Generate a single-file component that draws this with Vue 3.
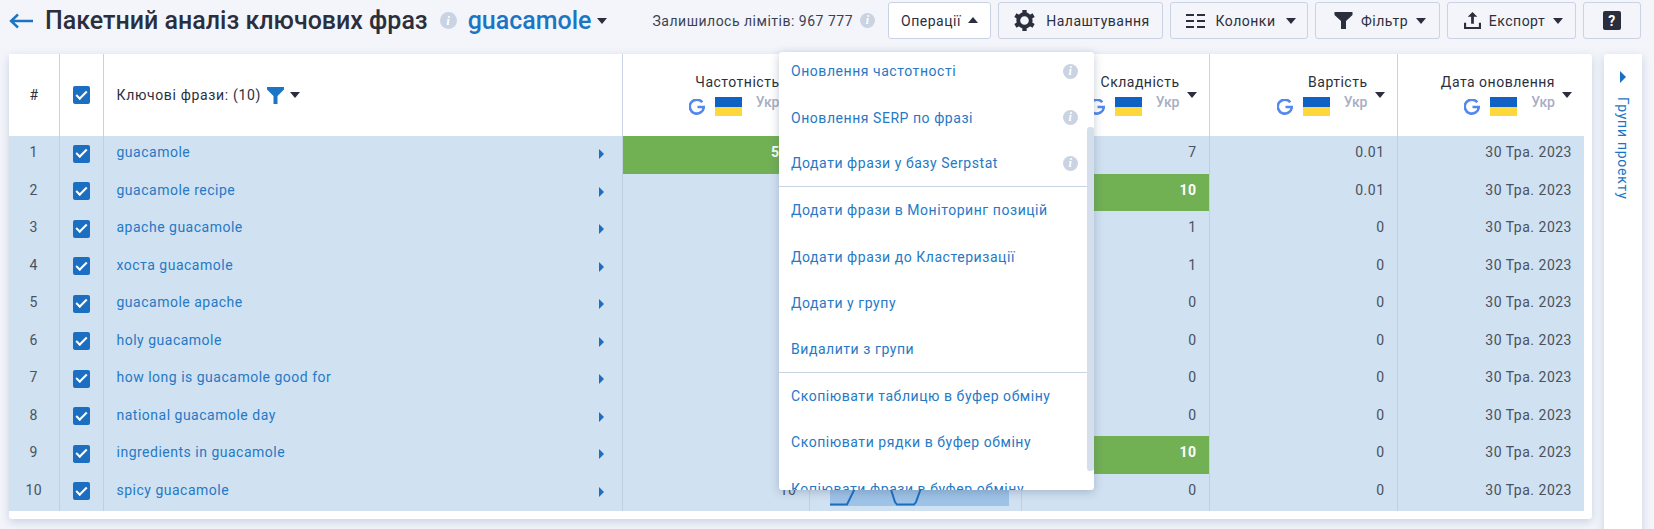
<script setup>
const rows = [
  { phrase: 'guacamole', freq: '590', freqHot: true, diff: '7', cost: '0.01' },
  { phrase: 'guacamole recipe', freq: '', diff: '10', diffHot: true, cost: '0.01' },
  { phrase: 'apache guacamole', freq: '', diff: '1', cost: '0' },
  { phrase: 'хоста guacamole', freq: '', diff: '1', cost: '0' },
  { phrase: 'guacamole apache', freq: '', diff: '0', cost: '0' },
  { phrase: 'holy guacamole', freq: '', diff: '0', cost: '0' },
  { phrase: 'how long is guacamole good for', freq: '', diff: '0', cost: '0' },
  { phrase: 'national guacamole day', freq: '', diff: '0', cost: '0' },
  { phrase: 'ingredients in guacamole', freq: '', diff: '10', diffHot: true, cost: '0' },
  { phrase: 'spicy guacamole', freq: '10', diff: '0', cost: '0', chart: true }
];

const columns = [
  { title: 'Частотність', cls: 'col-freq' },
  { title: 'Складність', cls: 'col-diff' },
  { title: 'Вартість', cls: 'col-cost' },
  { title: 'Дата оновлення', cls: 'col-date' }
];

const menu = [
  { label: 'Оновлення частотності', info: true },
  { label: 'Оновлення SERP по фразі', info: true },
  { label: 'Додати фрази у базу Serpstat', info: true, divider: true },
  { label: 'Додати фрази в Моніторинг позицій' },
  { label: 'Додати фрази до Кластеризації' },
  { label: 'Додати у групу' },
  { label: 'Видалити з групи', divider: true },
  { label: 'Скопіювати таблицю в буфер обміну' },
  { label: 'Скопіювати рядки в буфер обміну' },
  { label: 'Копіювати фрази в буфер обміну' }
];
</script>

<template>
  <div class="page">
    <header class="toolbar">
      <svg class="back" viewBox="0 0 24 16" width="24" height="16">
        <path d="M9 1.500 2 8l7 6.500M2 8h22" fill="none" stroke="#1c75c4" stroke-width="2.400" />
      </svg>
      <h1 class="title">Пакетний аналіз ключових фраз</h1>
      <span class="info info-lg">i</span>
      <span class="project">guacamole</span>
      <span class="caret caret-blue"></span>
      <span class="limits">Залишилось лімітів: 967 777</span>
      <span class="info info-limits">i</span>

      <button class="btn btn-ops">Операції <span class="caret caret-up"></span></button>
      <button class="btn btn-settings">
        <svg viewBox="0 0 24 24" width="23" height="23">
          <circle cx="12" cy="12" r="6.500" fill="none" stroke="#2b2f3d" stroke-width="4" />
          <path d="M12 1v4M12 19v4M2.500 6.500l3.500 2M18 15.500l3.500 2M2.500 17.500l3.500-2M18 8.500l3.500-2" fill="none" stroke="#2b2f3d" stroke-width="4.500" />
        </svg>
        Налаштування
      </button>
      <button class="btn btn-columns">
        <svg viewBox="0 0 19 16" width="21" height="16">
          <path fill="#2b2f3d" d="M0 1h8v2H0zM11 1h8v2h-8zM0 7h8v2H0zM11 7h8v2h-8zM0 13h8v2H0zM11 13h8v2h-8z" />
        </svg>
        Колонки <span class="caret"></span>
      </button>
      <button class="btn btn-filter">
        <svg viewBox="0 0 18 17" width="19" height="17">
          <path fill="#2b2f3d" d="M0 0h18v3l-6.500 6v8H6.500V9L0 3z" />
        </svg>
        Фільтр <span class="caret"></span>
      </button>
      <button class="btn btn-export">
        <svg viewBox="0 0 16 16" width="17" height="17">
          <path fill="#2b2f3d" d="M8 0l4.500 4.500H9.300V11H6.700V4.500H3.500zM0 10h2v4h12v-4h2v6H0z" />
        </svg>
        Експорт <span class="caret"></span>
      </button>
      <button class="btn btn-help"><span class="help-box">?</span></button>
    </header>

    <main class="content">
      <section class="card">
        <table class="grid">
          <colgroup>
            <col class="w-num" />
            <col class="w-check" />
            <col class="w-phrase" />
            <col class="w-freq" />
            <col class="w-chart" />
            <col class="w-diff" />
            <col class="w-cost" />
            <col class="w-date" />
          </colgroup>
          <thead>
            <tr>
              <th class="th-num">#</th>
              <th class="th-check"><span class="checkbox"></span></th>
              <th class="th-phrase">
                <div class="phrase-head">
                  <span>Ключові фрази: (10)</span>
                  <svg viewBox="0 0 17 17" width="17" height="17">
                    <path fill="#1c75c4" d="M0 0h17v2.500L10.500 9v8h-4V9L0 2.500z" />
                  </svg>
                  <span class="caret"></span>
                </div>
              </th>
              <template v-for="(col, i) in columns" :key="col.title">
                <th :class="['th-metric', col.cls]">
                  <div class="metric-head">
                    <div class="metric-stack">
                      <div class="metric-title">{{ col.title }}</div>
                      <div class="metric-sub">
                        <svg class="g-icon" viewBox="0 0 16 16" width="16" height="16">
                          <path d="M13.300 3.300A7 7 0 1 0 14.800 8H8.500" fill="none" stroke="#5488ee" stroke-width="2.600" />
                        </svg>
                        <span class="flag"></span>
                        <span class="lang">Укр</span>
                      </div>
                    </div>
                    <span class="caret"></span>
                  </div>
                </th>
                <th v-if="i === 0"></th>
              </template>
            </tr>
          </thead>
          <tbody>
            <tr v-for="(row, i) in rows" :key="row.phrase">
              <td class="td-num">{{ i + 1 }}</td>
              <td class="td-check"><span class="checkbox"></span></td>
              <td class="td-phrase">
                <div class="phrase-cell">
                  <span>{{ row.phrase }}</span>
                  <span class="arrow-right"></span>
                </div>
              </td>
              <td class="td-val" :class="{ hot: row.freqHot }">{{ row.freq }}</td>
              <td class="td-chart">
                <svg v-if="row.chart" class="spark" viewBox="0 0 179 32" width="179" height="32">
                  <rect x="0" y="0" width="179" height="32" fill="#9dc3e6" />
                  <path d="M0 30.500h17L32 0M56 0l9 28 2 2.500h17l2-2.500L96 0" fill="none" stroke="#1c6fc0" stroke-width="2" />
                </svg>
              </td>
              <td class="td-val" :class="{ hot: row.diffHot }">{{ row.diff }}</td>
              <td class="td-val">{{ row.cost }}</td>
              <td class="td-val">30 Тра. 2023</td>
            </tr>
          </tbody>
        </table>

        <div class="dropdown">
          <ul class="menu">
            <li v-for="item in menu" :key="item.label" class="menu-item" :class="{ divided: item.divider }">
              <span>{{ item.label }}</span>
              <span v-if="item.info" class="info">i</span>
            </li>
          </ul>
          <div class="scrollbar"></div>
        </div>
      </section>

      <aside class="side">
        <span class="arrow-right arrow-side"></span>
        <span class="side-label">Групи проекту</span>
      </aside>
    </main>
  </div>
</template>

<style scoped>
.page {
  height: 529px;
  overflow: hidden;
  background: #f3f5fa;
  font-family: Roboto, "Liberation Sans", sans-serif;
  font-size: 14px;
  color: #2b2f3d;
}

.toolbar {
  display: flex;
  align-items: center;
  height: 37px;
  padding: 2px 13px 0 9px;
}
.back {
  flex: none;
  margin-right: 12px;
}
.title {
  margin: 0 12px 0 0;
  font-size: 25px;
  font-weight: 500;
  white-space: nowrap;
  color: #2b2f3d;
}
.project {
  margin-left: 11px;
  font-size: 25px;
  font-weight: 500;
  color: #1c75c4;
}
.caret-blue {
  margin-left: 6px;
  border-top-color: #1c75c4;
}
.limits {
  margin-left: auto;
  letter-spacing: 0.5px;
  color: #3c4150;
}
.info-limits {
  margin: 0 13px 0 7px;
}

.info {
  display: inline-flex;
  flex: none;
  align-items: center;
  justify-content: center;
  width: 15px;
  height: 15px;
  border-radius: 50%;
  background: #c9d3e2;
  color: #fff;
  font-family: "Liberation Serif", serif;
  font-size: 12px;
  font-style: italic;
  font-weight: 700;
}
.info-lg {
  width: 17px;
  height: 17px;
  font-size: 13px;
}

.caret {
  display: inline-block;
  flex: none;
  width: 0;
  height: 0;
  border-left: 5px solid transparent;
  border-right: 5px solid transparent;
  border-top: 6px solid #2b2f3d;
}
.caret-up {
  margin-left: 3px;
  margin-bottom: 2px;
  border-top: 0;
  border-bottom: 6px solid #2b2f3d;
}

.btn {
  display: flex;
  flex: none;
  align-items: center;
  justify-content: center;
  gap: 8px;
  box-sizing: border-box;
  height: 37px;
  margin-left: 7px;
  padding: 0;
  border: 1px solid #c9d3e4;
  border-radius: 3px;
  background: #f3f5fa;
  font-family: inherit;
  font-size: 14px;
  letter-spacing: 0.5px;
  color: #2b2f3d;
}
.btn-ops {
  width: 103px;
  gap: 4px;
  margin-left: 0;
  background: #fff;
}
.btn-settings {
  width: 165px;
  gap: 10px;
  padding-left: 2px;
}
.btn-columns {
  width: 138px;
  gap: 10px;
  padding-left: 2px;
}
.btn-filter {
  width: 125px;
  padding-left: 5px;
}
.btn-export {
  width: 129px;
  padding-left: 4px;
}
.btn-help {
  width: 58px;
}
.help-box {
  display: flex;
  align-items: center;
  justify-content: center;
  width: 18px;
  height: 19px;
  border-radius: 2px;
  background: #2b2f3d;
  color: #fff;
  font-weight: 700;
  font-size: 14px;
}

.content {
  display: flex;
  align-items: flex-start;
  gap: 12px;
  padding: 15px 12px 0 9px;
}
.card {
  position: relative;
  flex: none;
  box-sizing: border-box;
  width: 1583px;
  padding: 0 8px 8px 0;
  border-radius: 3px;
  background: #fff;
  box-shadow: 0 3px 10px rgba(120, 140, 180, 0.35);
}
.side {
  display: flex;
  flex: none;
  flex-direction: column;
  align-items: center;
  box-sizing: border-box;
  width: 38px;
  height: 500px;
  padding-top: 17px;
  border-radius: 3px 0 0 0;
  background: #fff;
  box-shadow: 0 3px 10px rgba(120, 140, 180, 0.35);
}
.arrow-right {
  display: inline-block;
  flex: none;
  width: 0;
  height: 0;
  border-top: 5px solid transparent;
  border-bottom: 5px solid transparent;
  border-left: 5px solid #1c6fc0;
}
.arrow-side {
  border-top-width: 6px;
  border-bottom-width: 6px;
  border-left-width: 6px;
}
.side-label {
  margin-top: 14px;
  writing-mode: vertical-rl;
  letter-spacing: 0.75px;
  color: #1c75c4;
}

.grid {
  width: 1575px;
  table-layout: fixed;
  border-collapse: collapse;
}
.w-num { width: 50px; }
.w-check { width: 44px; }
.w-phrase { width: 519px; }
.w-freq { width: 187px; }
.w-chart { width: 212px; }
.w-diff { width: 188px; }
.w-cost { width: 188px; }
.w-date { width: 187px; }

th {
  height: 82px;
  padding: 0;
  border-right: 1px solid #c9d3e4;
  font-weight: 400;
  background: #fff;
}
th:last-child,
td:last-child {
  border-right: 0;
}
td {
  box-sizing: border-box;
  height: 37.5px;
  padding: 0 12px 5px;
  border-right: 1px solid #c0d0e2;
  background: #d0e1f1;
  letter-spacing: 0.5px;
  color: #4a5160;
}
.th-num,
.td-num {
  text-align: center;
  padding-left: 0;
  padding-right: 0;
}
.th-check,
.td-check {
  padding: 0;
  text-align: center;
}
.td-check {
  padding-bottom: 2px;
}
.checkbox {
  display: inline-flex;
  align-items: center;
  justify-content: center;
  width: 17px;
  height: 18px;
  border-radius: 2px;
  background: #1c6fc0;
  vertical-align: middle;
}
.checkbox::after {
  content: "";
  width: 9px;
  height: 4px;
  margin-top: -3px;
  border-left: 2px solid #fff;
  border-bottom: 2px solid #fff;
  transform: rotate(-45deg);
}
.phrase-head {
  display: flex;
  align-items: center;
  gap: 6px;
  padding-left: 13px;
  letter-spacing: 0.65px;
}
.phrase-cell {
  display: flex;
  align-items: center;
  justify-content: space-between;
  padding-right: 4px;
  color: #2679c5;
}
.td-phrase {
  padding-left: 13px;
  padding-right: 14px;
}
.phrase-cell .arrow-right {
  margin-top: 4px;
}

.metric-head {
  display: flex;
  align-items: center;
  justify-content: flex-end;
  gap: 7px;
  padding-right: 12px;
}
.metric-stack {
  display: flex;
  flex-direction: column;
  align-items: flex-end;
  gap: 7px;
}
.metric-title {
  white-space: nowrap;
  letter-spacing: 0.5px;
}
.metric-sub {
  display: flex;
  align-items: flex-start;
  height: 19px;
}
.g-icon {
  margin-top: 2px;
}
.flag {
  width: 27px;
  height: 19px;
  margin: 0 14px 0 10px;
  background: linear-gradient(#0f62c4 0 50%, #fed73b 50% 100%);
}
.lang {
  margin-top: -3px;
  font-weight: 500;
  color: #a9aec5;
}

.td-val {
  text-align: right;
}
.td-val.hot {
  background: #72b054;
  color: #fff;
  font-weight: 700;
}
.td-chart {
  padding: 0 0 0 20px;
  vertical-align: top;
}
.spark {
  display: block;
}

.dropdown {
  position: absolute;
  top: -2px;
  left: 770px;
  z-index: 5;
  width: 315px;
  height: 438px;
  overflow: hidden;
  border-radius: 3px;
  background: #fff;
  box-shadow: 0 2px 10px rgba(60, 80, 120, 0.3);
}
.menu {
  margin: -4px 0 0;
  padding: 0;
  list-style: none;
}
.menu-item {
  display: flex;
  align-items: center;
  justify-content: space-between;
  box-sizing: border-box;
  height: 46.4px;
  padding: 0 16px 0 12px;
  letter-spacing: 0.55px;
  color: #2679c5;
}
.menu-item.divided {
  border-bottom: 1px solid #c9d3e4;
}
.scrollbar {
  position: absolute;
  top: 75px;
  right: 0;
  width: 7px;
  height: 344px;
  border-radius: 3px;
  background: #d5deeb;
}
</style>

<style>
body {
  background: #f3f5fa;
  overflow: hidden;
}
</style>
